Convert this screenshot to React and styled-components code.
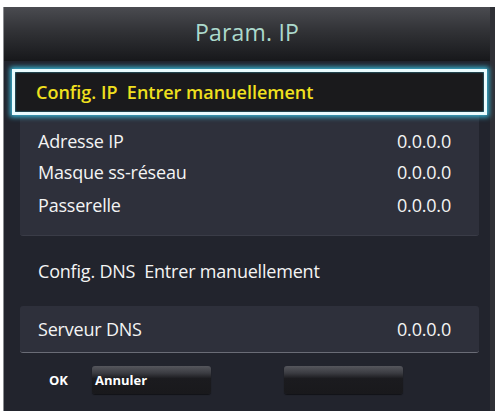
import React from 'react';
import styled, { createGlobalStyle } from 'styled-components';

const Global = createGlobalStyle`
  html, body { margin: 0; padding: 0; background: #ffffff; }
  body { font-family: "Open Sans", "Noto Sans", sans-serif; }
`;

const Panel = styled.div`
  box-sizing: border-box;
  width: 492px;
  height: 404px;
  margin: 7px 0 0 3px;
  background: #22242d;
  border-left: 1px solid #8a8c90;
  border-right: 5px solid #2f3036;
  display: flex;
  flex-direction: column;
`;

const Header = styled.div`
  box-sizing: border-box;
  height: 54px;
  flex-shrink: 0;
  display: flex;
  align-items: center;
  justify-content: center;
  padding-bottom: 4px;
  background: linear-gradient(to bottom, #4a4b50 0%, #313236 45%, #17181b 100%);
  color: #acd9cc;
  font-size: 23px;
  letter-spacing: 0.2px;
`;

const Focus = styled.div`
  margin: 8px 3px 0 8px;
  height: 40px;
  display: flex;
  align-items: center;
  padding-left: 21px;
  background: #1a1a1c;
  border: 3px solid #eafcff;
  box-shadow: 0 0 5px 2px #3ab6d6, inset 0 0 2px #3ab6d6;
  color: #f0e01e;
  font-size: 18px;
  font-weight: 600;
  letter-spacing: 0;
  position: relative;
  z-index: 1;
`;

const Group = styled.div`
  margin: ${p => p.$top || 0}px 11px 0 16px;
  padding: ${p => p.$pad};
  background: #2e303b;
  border-radius: 3px;
  border-bottom: 1px solid ${p => p.$line || '#3a3c47'};
`;

const Row = styled.div`
  height: ${p => p.$h || 32}px;
  display: flex;
  align-items: center;
  justify-content: space-between;
  padding: 0 28px 0 18px;
  color: #f4f4f4;
  font-size: 18px;
  font-weight: 500;
  letter-spacing: -0.2px;
`;

const Plain = styled.div`
  height: 70px;
  display: flex;
  align-items: center;
  padding-left: 34px;
  color: #f4f4f4;
  font-size: 18px;
  font-weight: 500;
  letter-spacing: -0.2px;
`;

const Footer = styled.div`
  display: flex;
  align-items: center;
  padding: 13px 0 0 45px;
`;

const Ok = styled.span`
  color: #ffffff;
  font-size: 13px;
  font-weight: 700;
  width: 43px;
`;

const Button = styled.div`
  box-sizing: border-box;
  width: 119px;
  height: 28px;
  margin-right: ${p => p.$gap || 0}px;
  display: flex;
  align-items: center;
  padding-left: 3px;
  border-radius: 3px;
  background: linear-gradient(to bottom, #55565c 0%, #3b3c42 25%, #1b1b1f 45%, #19191c 100%);
  box-shadow: 0 1px 1px rgba(0, 0, 0, 0.5);
  color: #ffffff;
  font-size: 13px;
  font-weight: 700;
`;

const ipRows = [
  ['Adresse IP', '0.0.0.0', 31],
  ['Masque ss-réseau', '0.0.0.0', 32],
  ['Passerelle', '0.0.0.0', 34],
];

export default function App() {
  return (
    <>
      <Global />
      <Panel>
        <Header>Param. IP</Header>
        <Focus>Config. IP&nbsp; Entrer manuellement</Focus>
        <Group $top={-3} $pad="13px 0 13px">
          {ipRows.map(([label, value, h]) => (
            <Row key={label} $h={h}>
              <span>{label}</span>
              <span>{value}</span>
            </Row>
          ))}
        </Group>
        <Plain>Config. DNS&nbsp; Entrer manuellement</Plain>
        <Group $pad="0" $line="#6a6c76">
          <Row $h={46}>
            <span>Serveur DNS</span>
            <span>0.0.0.0</span>
          </Row>
        </Group>
        <Footer>
          <Ok>OK</Ok>
          <Button $gap={73}>Annuler</Button>
          <Button />
        </Footer>
      </Panel>
    </>
  );
}
